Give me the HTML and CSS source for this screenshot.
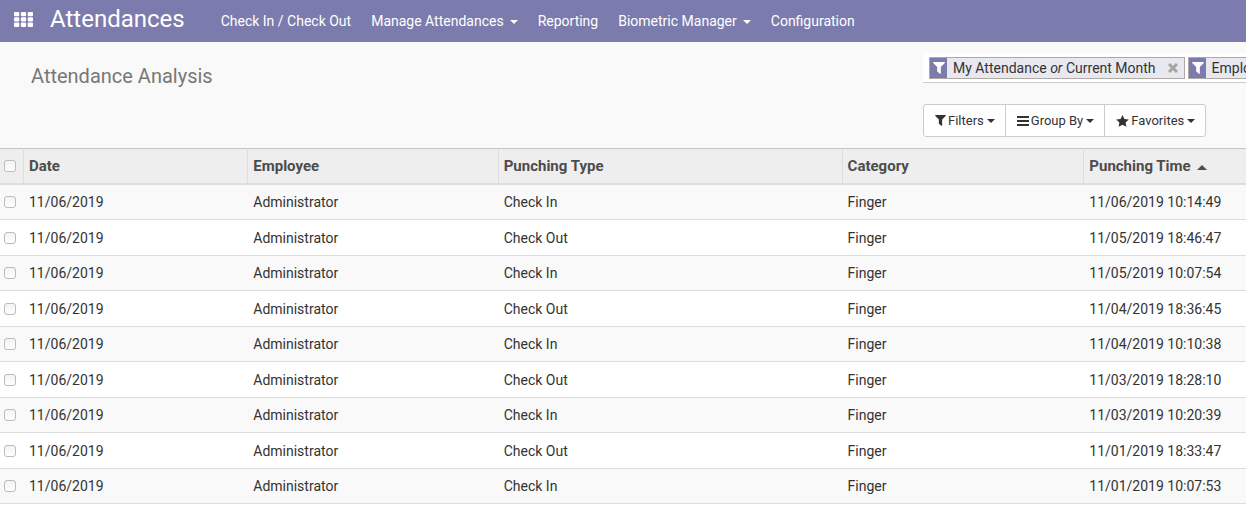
FILE: index.html
```
<!DOCTYPE html>
<html lang="en">
<head>
<meta charset="utf-8">
<title>Attendance Analysis</title>
<link rel="stylesheet" href="styles.css">
</head>
<body>
<svg class="symbols" aria-hidden="true">
  <symbol id="funnel" viewBox="0 0 12 12"><path d="M.6 0h10.8c.5 0 .7.6.4.9L7.8 5v6.500c0 .5-.5.6-.8.300L4.500 9.700a.8.8 0 0 1-.3-.5V5L.2.900C-.1.600.1 0 .6 0z"/></symbol>
</svg>
<header class="navbar">
  <button class="apps" aria-label="Applications">
    <svg width="19" height="15" viewBox="0 0 19 15"><g fill="#fff"><rect width="5.300" height="4.300" rx="1"/><rect x="6.900" width="5.200" height="4.300" rx="1"/><rect x="13.700" width="5.300" height="4.300" rx="1"/><rect y="5.300" width="5.300" height="4.300" rx="1"/><rect x="6.900" y="5.300" width="5.200" height="4.300" rx="1"/><rect x="13.700" y="5.300" width="5.300" height="4.300" rx="1"/><rect y="10.600" width="5.300" height="4.300" rx="1"/><rect x="6.900" y="10.600" width="5.200" height="4.300" rx="1"/><rect x="13.700" y="10.600" width="5.300" height="4.300" rx="1"/></g></svg>
  </button>
  <a class="brand" href="#">Attendances</a>
  <nav class="menu">
    <a href="#">Check In / Check Out</a>
    <a href="#">Manage Attendances<span class="caret"></span></a>
    <a href="#">Reporting</a>
    <a href="#">Biometric Manager<span class="caret"></span></a>
    <a href="#">Configuration</a>
  </nav>
</header>
<section class="panel">
  <h1 class="title">Attendance Analysis</h1>
  <div class="tools">
    <div class="search">
      <div class="facet">
        <span class="facet-icon"><svg width="12" height="12"><use href="#funnel"/></svg></span>
        <span class="facet-text">My Attendance <em>or</em> Current Month</span>
        <button class="remove" aria-label="Remove"><svg width="10" height="10" viewBox="0 0 10 10"><path d="M1 1l8 8M9 1l-8 8" stroke="#aaa39d" stroke-width="3"/></svg></button>
      </div>
      <div class="facet">
        <span class="facet-icon"><svg width="12" height="12"><use href="#funnel"/></svg></span>
        <span class="facet-text">Employee</span>
      </div>
    </div>
    <div class="buttons">
      <button><svg width="11" height="11"><use href="#funnel"/></svg>Filters<span class="caret"></span></button>
      <button><svg width="12" height="10" viewBox="0 0 12 10"><path d="M0 1h12M0 5h12M0 9h12" stroke="currentColor" stroke-width="2"/></svg>Group By<span class="caret"></span></button>
      <button><svg width="13" height="12" viewBox="0 0 13 12"><path d="M6.500 0l1.900 3.900 4.400.6-3.200 3 .8 4.300-3.900-2-3.900 2 .8-4.300-3.200-3 4.400-.6z"/></svg>Favorites<span class="caret"></span></button>
    </div>
  </div>
</section>
<table class="list">
  <colgroup><col class="c-check"><col class="c-date"><col class="c-employee"><col class="c-type"><col class="c-category"><col></colgroup>
  <thead>
    <tr><th><input type="checkbox" aria-label="Select all"></th><th>Date</th><th>Employee</th><th>Punching Type</th><th>Category</th><th>Punching Time<span class="caret up"></span></th></tr>
  </thead>
  <tbody>
    <tr><td><input type="checkbox" aria-label="Select row"></td><td>11/06/2019</td><td>Administrator</td><td>Check In</td><td>Finger</td><td>11/06/2019 10:14:49</td></tr>
    <tr><td><input type="checkbox" aria-label="Select row"></td><td>11/06/2019</td><td>Administrator</td><td>Check Out</td><td>Finger</td><td>11/05/2019 18:46:47</td></tr>
    <tr><td><input type="checkbox" aria-label="Select row"></td><td>11/06/2019</td><td>Administrator</td><td>Check In</td><td>Finger</td><td>11/05/2019 10:07:54</td></tr>
    <tr><td><input type="checkbox" aria-label="Select row"></td><td>11/06/2019</td><td>Administrator</td><td>Check Out</td><td>Finger</td><td>11/04/2019 18:36:45</td></tr>
    <tr><td><input type="checkbox" aria-label="Select row"></td><td>11/06/2019</td><td>Administrator</td><td>Check In</td><td>Finger</td><td>11/04/2019 10:10:38</td></tr>
    <tr><td><input type="checkbox" aria-label="Select row"></td><td>11/06/2019</td><td>Administrator</td><td>Check Out</td><td>Finger</td><td>11/03/2019 18:28:10</td></tr>
    <tr><td><input type="checkbox" aria-label="Select row"></td><td>11/06/2019</td><td>Administrator</td><td>Check In</td><td>Finger</td><td>11/03/2019 10:20:39</td></tr>
    <tr><td><input type="checkbox" aria-label="Select row"></td><td>11/06/2019</td><td>Administrator</td><td>Check Out</td><td>Finger</td><td>11/01/2019 18:33:47</td></tr>
    <tr><td><input type="checkbox" aria-label="Select row"></td><td>11/06/2019</td><td>Administrator</td><td>Check In</td><td>Finger</td><td>11/01/2019 10:07:53</td></tr>
  </tbody>
</table>
</body>
</html>
```
FILE: styles.css
```
* { box-sizing: border-box; }
body {
  margin: 0;
  background: #fff;
  color: #333;
  font: 14px/20px Roboto, sans-serif;
  overflow-x: hidden;
}
a { color: inherit; text-decoration: none; white-space: nowrap; }
button { margin: 0; padding: 0; border: 0; background: none; color: inherit; font: inherit; }
svg { display: block; fill: currentColor; flex: none; }
.symbols { position: absolute; width: 0; height: 0; }
.caret {
  display: inline-block;
  margin-left: 6px;
  vertical-align: middle;
  border: 4px solid transparent;
  border-top-color: currentColor;
  border-bottom: 0;
}
.caret.up {
  border: 5px solid transparent;
  border-top: 0;
  border-bottom-color: currentColor;
}
.navbar {
  display: flex;
  align-items: center;
  height: 42px;
  padding-left: 14px;
  background: #7c7bad;
  color: #fff;
}
.apps { padding-bottom: 3px; }
.brand { margin-left: 17px; padding-bottom: 4px; font-size: 24px; line-height: 32px; }
.menu { display: flex; gap: 20px; margin-left: 36px; }
.panel {
  display: grid;
  grid-template-columns: 923fr 323fr;
  height: 106px;
  background: #f9f9f9;
}
.title { margin: 22px 0 0 31px; color: #777; font-size: 20px; font-weight: 400; line-height: 24px; }
.tools { min-width: 0; padding-top: 11px; }
.search {
  display: flex;
  gap: 3px;
  height: 30px;
  padding: 4px 0 3px 6px;
  border-bottom: 1px solid #ccc;
  background: #fff;
  overflow: hidden;
}
.facet {
  display: flex;
  flex: none;
  align-items: center;
  border: 1px solid #afa8a3;
  background: #e8e8f1;
}
.facet-icon { display: flex; align-items: center; align-self: stretch; padding: 0 3px; width: 17px; background: #7c7bad; color: #fff; }
.facet-text { padding: 0 12px 0 6px; }
.remove { padding-right: 6px; }
.buttons { display: inline-flex; margin-top: 21px; border: 1px solid #ccc; border-radius: 3px; background: #fff; }
.buttons button { display: flex; align-items: center; gap: 2px; height: 31px; padding: 0 10px 0 11px; font-size: 13px; }
.buttons button + button { border-left: 1px solid #ccc; }
.buttons .caret { margin-left: 1px; }
.list { width: 100%; table-layout: fixed; border-collapse: separate; border-spacing: 0; }
.c-check { width: 23px; }
.c-date { width: 18%; }
.c-employee { width: 20.1%; }
.c-type { width: 27.6%; }
.c-category { width: 19.4%; }
.list th, .list td { padding: 0 6px; text-align: left; white-space: nowrap; }
.list th {
  height: 37px;
  border-top: 1px solid #c4c4c4;
  border-bottom: 2px solid #ddd;
  background: #eee;
  color: #4c4c4c;
  font-size: 15px;
  font-weight: 700;
}
.list th + th { border-left: 1px solid #ddd; padding-left: 5px; }
.list td { height: 35px; border-bottom: 1px solid #ddd; }
.list tr > :first-child { padding: 0 0 0 4px; }
.list tbody tr:nth-child(odd) { background: #f9f9f9; }
.list tbody tr:nth-child(even) td { height: 36px; }
input[type="checkbox"] {
  display: block;
  appearance: none;
  width: 12px;
  height: 12px;
  margin: 0;
  border: 1px solid #bcbcbc;
  border-radius: 3px;
  background: linear-gradient(#f3f3f3, #fff);
}
```
